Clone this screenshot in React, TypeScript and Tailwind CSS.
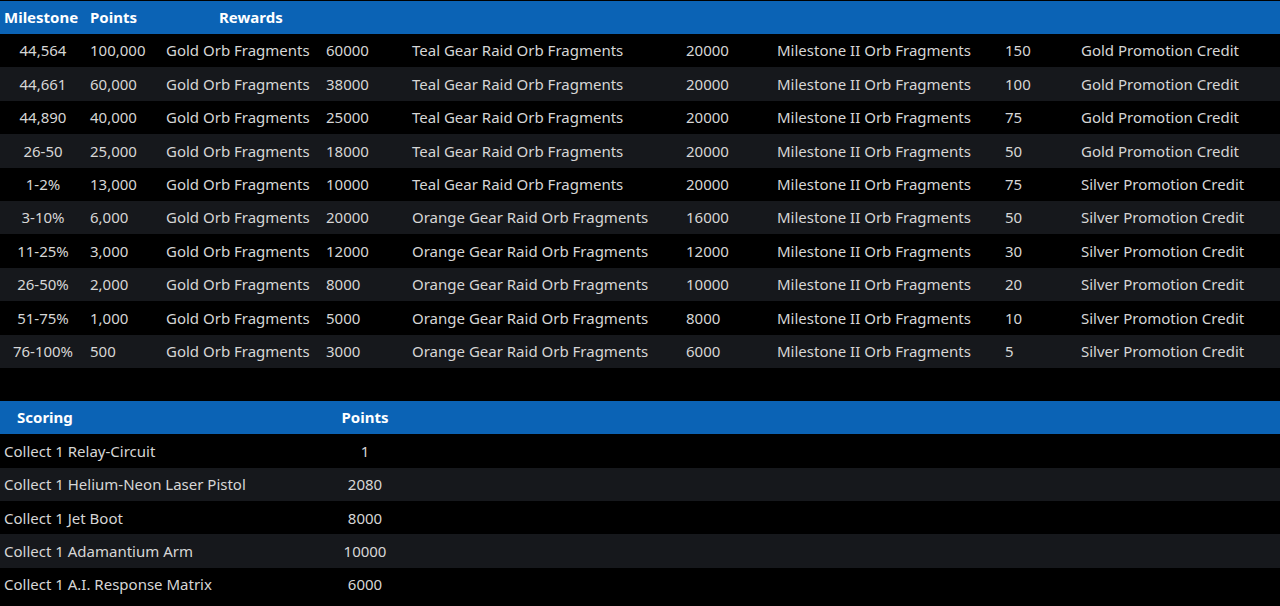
const rows = [
  ['44,564', '100,000', '60000', 'Teal', '20000', '150', 'Gold'],
  ['44,661', '60,000', '38000', 'Teal', '20000', '100', 'Gold'],
  ['44,890', '40,000', '25000', 'Teal', '20000', '75', 'Gold'],
  ['26-50', '25,000', '18000', 'Teal', '20000', '50', 'Gold'],
  ['1-2%', '13,000', '10000', 'Teal', '20000', '75', 'Silver'],
  ['3-10%', '6,000', '20000', 'Orange', '16000', '50', 'Silver'],
  ['11-25%', '3,000', '12000', 'Orange', '12000', '30', 'Silver'],
  ['26-50%', '2,000', '8000', 'Orange', '10000', '20', 'Silver'],
  ['51-75%', '1,000', '5000', 'Orange', '8000', '10', 'Silver'],
  ['76-100%', '500', '3000', 'Orange', '6000', '5', 'Silver'],
];

const scoring = [
  ['Collect 1 Relay-Circuit', '1'],
  ['Collect 1 Helium-Neon Laser Pistol', '2080'],
  ['Collect 1 Jet Boot', '8000'],
  ['Collect 1 Adamantium Arm', '10000'],
  ['Collect 1 A.I. Response Matrix', '6000'],
];

const cols = 'grid grid-cols-[86px_76px_160px_86px_274px_91px_228px_76px_1fr]';

export default function App() {
  return (
    <div className="h-[606px] overflow-hidden bg-black pt-px font-['Liberation_Sans',Arial,sans-serif] text-[15px] text-[#d6d6d6]">
      <div className={`${cols} h-[33px] items-center bg-[#0b63b5] font-bold text-white`}>
        <div className="pl-1">Milestone</div>
        <div className="pl-1">Points</div>
        <div className="col-span-2 pl-[57px]">Rewards</div>
      </div>
      {rows.map((r, i) => (
        <div
          key={i}
          className={`${cols} h-[33.4px] items-center ${i % 2 ? 'bg-[#16181c]' : 'bg-black'}`}
        >
          <div className="text-center">{r[0]}</div>
          <div className="pl-1">{r[1]}</div>
          <div className="pl-1">Gold Orb Fragments</div>
          <div className="pl-1">{r[2]}</div>
          <div className="pl-1">{r[3]} Gear Raid Orb Fragments</div>
          <div className="pl-1">{r[4]}</div>
          <div className="pl-1">Milestone II Orb Fragments</div>
          <div className="pl-1">{r[5]}</div>
          <div className="pl-1">{r[6]} Promotion Credit</div>
        </div>
      ))}
      <div className="h-[33px]" />
      <div className="grid h-[33.4px] grid-cols-[330px_70px_1fr] items-center bg-[#0b63b5] font-bold text-white">
        <div className="pl-[17px]">Scoring</div>
        <div className="text-center">Points</div>
      </div>
      {scoring.map((s, i) => (
        <div
          key={i}
          className={`grid h-[33.4px] grid-cols-[330px_70px_1fr] items-center ${i % 2 ? 'bg-[#16181c]' : 'bg-black'}`}
        >
          <div className="pl-1">{s[0]}</div>
          <div className="text-center">{s[1]}</div>
        </div>
      ))}
    </div>
  );
}
